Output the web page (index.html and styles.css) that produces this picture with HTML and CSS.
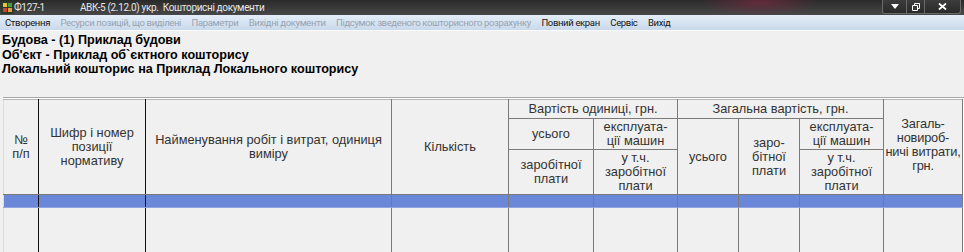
FILE: index.html
```html
<!DOCTYPE html>
<html lang="uk">

<head>
    <meta charset="UTF-8">
    <meta name="viewport" content="width=device-width, initial-scale=1.0">
    <title>Кошторисні документи</title>
    <link rel="stylesheet" href="styles.css">
</head>

<body>
    <div class="window">
        <div class="titlebar">
            <svg class="app-icon" width="13" height="13" viewBox="0 0 13 13">
                <rect x="0" y="0" width="13" height="13" rx="2" fill="#2c3a2a"/>
                <path d="M2 2h4v4H2z" fill="#e2c23a"/>
                <path d="M7 2h4v4H7z" fill="#4f9a3c"/>
                <path d="M2 7h4v4H2z" fill="#c8452e"/>
                <path d="M7 7h4v4H7z" fill="#d9a23a"/>
            </svg>
            <span class="doc-name">Ф127-1</span>
            <span class="app-name">АВК-5 (2.12.0) укр.&nbsp; Кошторисні документи</span>
            <div class="caption-buttons">
                <span class="cbtn cbtn-min">
                    <svg width="8" height="5" viewBox="0 0 8 5"><path d="M0 0h8L4 5z" fill="#fff"/></svg>
                </span>
                <span class="cbtn cbtn-restore">
                    <svg width="8" height="8" viewBox="0 0 8 8">
                        <path d="M2.5 0.5h5v5h-5z" fill="none" stroke="#fff"/>
                        <path d="M0.5 2.5h5v5h-5z" fill="#3a3a3a" stroke="#fff"/>
                    </svg>
                </span>
                <span class="cbtn cbtn-close">
                    <svg width="9" height="7" viewBox="0 0 9 7"><path d="M1 0.5l7 6M8 0.5l-7 6" stroke="#fff" stroke-width="1.8"/></svg>
                </span>
            </div>
        </div>

        <div class="menubar">
            <span class="menu-item">Створення</span>
            <span class="menu-item disabled">Ресурси позицій, що виділені</span>
            <span class="menu-item disabled">Параметри</span>
            <span class="menu-item disabled">Вихідні документи</span>
            <span class="menu-item disabled">Підсумок зведеного кошторисного розрахунку</span>
            <span class="menu-item">Повний екран</span>
            <span class="menu-item">Сервіс</span>
            <span class="menu-item">Вихід</span>
        </div>

        <div class="content">
            <div class="heading">
                <div>Будова - (1) Приклад будови</div>
                <div>Об'єкт - Приклад об`єктного кошторису</div>
                <div>Локальний кошторис на Приклад Локального кошторису</div>
            </div>

            <div class="table-wrap">
                <table class="estimate">
                    <colgroup>
                        <col style="width: 35px">
                        <col style="width: 107px">
                        <col style="width: 246px">
                        <col style="width: 117px">
                        <col style="width: 85px">
                        <col style="width: 84px">
                        <col style="width: 61px">
                        <col style="width: 61px">
                        <col style="width: 84px">
                        <col style="width: 79px">
                    </colgroup>
                    <tr class="row-a">
                        <th rowspan="3" class="dark-right">№<br>п/п</th>
                        <th rowspan="3" class="dark-right">Шифр і номер<br>позиції<br>нормативу</th>
                        <th rowspan="3">Найменування робіт і витрат, одиниця<br>виміру</th>
                        <th rowspan="3">Кількість</th>
                        <th colspan="2">Вартість одиниці, грн.</th>
                        <th colspan="3">Загальна вартість, грн.</th>
                        <th rowspan="3" class="overheads">Загаль-<br>новироб-<br>ничі витрати,<br>грн.</th>
                    </tr>
                    <tr class="row-b">
                        <th>усього</th>
                        <th>експлуата-<br>ції машин</th>
                        <th rowspan="2">усього</th>
                        <th rowspan="2">заро-<br>бітної<br>плати</th>
                        <th>експлуата-<br>ції машин</th>
                    </tr>
                    <tr class="row-c">
                        <th>заробітної<br>плати</th>
                        <th>у т.ч.<br>заробітної<br>плати</th>
                        <th>у т.ч.<br>заробітної<br>плати</th>
                    </tr>
                    <tr class="row-selected">
                        <td class="dark-right"></td>
                        <td class="dark-right"></td>
                        <td></td><td></td><td></td><td></td><td></td><td></td><td></td><td></td>
                    </tr>
                    <tr class="row-empty">
                        <td class="dark-right"></td>
                        <td class="dark-right"></td>
                        <td></td><td></td><td></td><td></td><td></td><td></td><td></td><td></td>
                    </tr>
                </table>
            </div>
        </div>
    </div>
</body>

</html>
```

FILE: styles.css
```css
html, body {
    margin: 0;
    padding: 0;
}

body {
    width: 964px;
    height: 252px;
    overflow: hidden;
    background: #f0f0f0;
}

.window {
    display: flex;
    flex-direction: column;
    height: 252px;
    overflow: hidden;
}

/* title bar */
.titlebar {
    position: relative;
    display: flex;
    flex: none;
    align-items: center;
    height: 15px;
    padding-left: 1px;
    background:
        radial-gradient(ellipse 60px 14px at 760px 2px, rgba(140, 40, 70, 0.55), transparent),
        linear-gradient(#2a2a2a, #484848);
    font-family: Roboto, "Noto Sans", sans-serif;
    font-size: 10px;
    letter-spacing: -0.35px;
    color: #e6e6e6;
    white-space: nowrap;
}

.app-icon {
    flex: none;
}

.doc-name {
    margin-left: 0;
}

.app-name {
    margin-left: 35px;
}

.caption-buttons {
    position: absolute;
    top: 0;
    right: 3px;
    display: flex;
    height: 13px;
    border: 1px solid #6a6a6a;
    border-top: none;
    border-radius: 0 0 3px 3px;
    background: linear-gradient(#3c3c3c, #2a2a2a);
}

.cbtn {
    display: flex;
    align-items: center;
    justify-content: center;
}

.cbtn + .cbtn {
    border-left: 1px solid #6a6a6a;
}

.cbtn-min {
    width: 23px;
}

.cbtn-restore {
    width: 17px;
}

.cbtn-close {
    width: 35px;
}

/* menu bar */
.menubar {
    display: flex;
    flex: none;
    align-items: center;
    gap: 10.5px;
    height: 15px;
    padding-left: 5px;
    background: linear-gradient(#e4edf8, #c9d9eb);
    border-bottom: 1px solid #fafcfe;
    font-family: Roboto, "Noto Sans", sans-serif;
    font-size: 9.5px;
    letter-spacing: -0.35px;
    color: #151515;
    white-space: nowrap;
}

.menu-item.disabled {
    color: #97a3b0;
}

/* document */
.content {
    flex: 1;
    padding-left: 3px;
}

.heading {
    height: 64px;
    padding-top: 2px;
    margin-left: -1px;
    font-family: "Liberation Sans", Arial, sans-serif;
    font-weight: bold;
    font-size: 12.6px;
    line-height: 14.5px;
    color: #000;
}

.table-wrap {
    border-top: 1px solid #a7a7a7;
    padding-top: 1px;
    background: #fff;
}

.estimate {
    table-layout: fixed;
    width: 959px;
    border-collapse: collapse;
    background: #f0f0f0;
    font-family: "Liberation Sans", Arial, sans-serif;
    font-size: 12.8px;
    line-height: 14px;
    color: #333;
}

.estimate th,
.estimate td {
    padding: 0;
    border: 1px solid #7a7a7a;
    font-weight: normal;
    text-align: center;
    vertical-align: middle;
    overflow: hidden;
    white-space: nowrap;
}

.estimate tr:first-child th {
    border-top: 1px solid #b5b5b5;
}

.estimate th:first-child,
.estimate td:first-child {
    border-left: 1px solid #dcdcdc;
}

.estimate .dark-right {
    border-right: 1px solid #111;
}

.estimate .overheads {
    letter-spacing: -0.2px;
    padding-bottom: 4px;
}

.row-a {
    height: 19px;
}

.row-b {
    height: 31px;
}

.row-c {
    height: 45px;
}

.row-selected {
    height: 13px;
}

.row-selected td {
    background: #6b87d8;
    border-top-color: #8ea4e2;
    border-bottom-color: #8ea4e2;
}

.row-empty {
    height: 60px;
}
```
